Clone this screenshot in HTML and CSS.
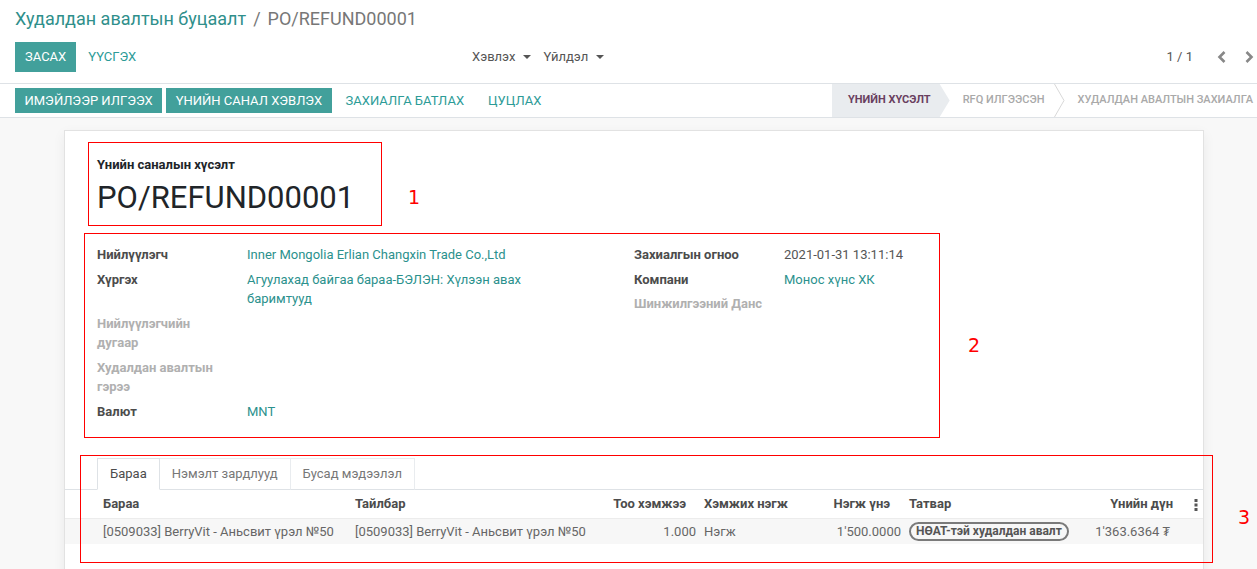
FILE: index.html
```html
<!DOCTYPE html>
<html lang="mn">
<head>
<meta charset="utf-8">
<title>PO/REFUND00001</title>
<link rel="stylesheet" href="styles.css">
</head>
<body>
<div class="app">
  <div class="control-panel">
    <ol class="breadcrumb">
      <li class="bc-link">Худалдан авалтын буцаалт</li>
      <li class="bc-active">PO/REFUND00001</li>
    </ol>
    <div class="cp-bottom">
      <div class="cp-left">
        <button class="btn btn-primary">ЗАСАХ</button>
        <button class="btn btn-link">ҮҮСГЭХ</button>
      </div>
      <div class="cp-menus">
        <span class="dropdown">Хэвлэх<span class="caret"></span></span>
        <span class="dropdown">Үйлдэл<span class="caret"></span></span>
      </div>
      <div class="pager">
        <span class="pager-value">1 / 1</span>
        <svg class="pager-prev" width="10" height="14" viewBox="0 0 10 14"><polyline points="7.5,2 2.5,7 7.5,12" /></svg>
        <svg class="pager-next" width="10" height="14" viewBox="0 0 10 14"><polyline points="2.5,2 7.5,7 2.5,12" /></svg>
      </div>
    </div>
  </div>

  <div class="statusbar">
    <div class="sb-buttons">
      <button class="btn btn-sm btn-primary">ИМЭЙЛЭЭР ИЛГЭЭХ</button>
      <button class="btn btn-sm btn-primary">ҮНИЙН САНАЛ ХЭВЛЭХ</button>
      <button class="btn btn-sm btn-link">ЗАХИАЛГА БАТЛАХ</button>
      <button class="btn btn-sm btn-link">ЦУЦЛАХ</button>
    </div>
    <div class="sb-stages">
      <span class="stage active">ҮНИЙН ХҮСЭЛТ</span>
      <span class="stage">RFQ ИЛГЭЭСЭН<svg class="stage-chev" width="11" height="33" viewBox="0 0 11 33"><polyline points="0.5,0 10,16.5 0.5,33" /></svg></span>
      <span class="stage last">ХУДАЛДАН АВАЛТЫН ЗАХИАЛГА</span>
    </div>
  </div>

  <div class="sheet-bg">
    <div class="sheet">
      <div class="oe-title">
        <div class="title-label">Үнийн саналын хүсэлт</div>
        <h1 class="title-name">PO/REFUND00001</h1>
      </div>

      <div class="groups">
        <div class="group">
          <div class="f-label">Нийлүүлэгч</div>
          <div class="f-value link">Inner Mongolia Erlian Changxin Trade Co.,Ltd</div>
          <div class="f-label">Хүргэх</div>
          <div class="f-value link">Агуулахад байгаа бараа-БЭЛЭН: Хүлээн авах баримтууд</div>
          <div class="f-label muted">Нийлүүлэгчийн дугаар</div>
          <div class="f-value"></div>
          <div class="f-label muted">Худалдан авалтын гэрээ</div>
          <div class="f-value"></div>
          <div class="f-label">Валют</div>
          <div class="f-value link">MNT</div>
        </div>
        <div class="group">
          <div class="f-label">Захиалгын огноо</div>
          <div class="f-value">2021-01-31 13:11:14</div>
          <div class="f-label">Компани</div>
          <div class="f-value link">Монос хүнс ХК</div>
          <div class="f-label muted">Шинжилгээний Данс</div>
          <div class="f-value"></div>
        </div>
      </div>

      <div class="notebook">
        <ul class="tabs">
          <li class="tab active">Бараа</li>
          <li class="tab">Нэмэлт зардлууд</li>
          <li class="tab">Бусад мэдээлэл</li>
        </ul>
        <table class="lines">
          <colgroup>
            <col class="c-product">
            <col class="c-desc">
            <col class="c-qty">
            <col class="c-uom">
            <col class="c-price">
            <col class="c-tax">
            <col class="c-subtotal">
            <col class="c-opt">
          </colgroup>
          <thead>
            <tr>
              <th class="first">Бараа</th>
              <th>Тайлбар</th>
              <th class="num qty-h">Тоо хэмжээ</th>
              <th>Хэмжих нэгж</th>
              <th class="num price-h">Нэгж үнэ</th>
              <th>Татвар</th>
              <th class="num total-h">Үнийн дүн</th>
              <th class="opt"><svg width="4" height="12" viewBox="0 0 4 12"><rect x="0.5" y="0" width="3" height="3"/><rect x="0.5" y="4.5" width="3" height="3"/><rect x="0.5" y="9" width="3" height="3"/></svg></th>
            </tr>
          </thead>
          <tbody>
            <tr>
              <td class="first">[0509033] BerryVit - Аньсвит үрэл №50</td>
              <td>[0509033] BerryVit - Аньсвит үрэл №50</td>
              <td class="num">1.000</td>
              <td>Нэгж</td>
              <td class="num">1'500.0000</td>
              <td><span class="tag">НӨАТ-тэй худалдан авалт</span></td>
              <td class="num subtotal">1'363.6364 ₮</td>
              <td></td>
            </tr>
          </tbody>
        </table>
      </div>
    </div>
  </div>

  <div class="annot box1"></div>
  <div class="annot box2"></div>
  <div class="annot box3"></div>
  <span class="annot-num n1">1</span>
  <span class="annot-num n2">2</span>
  <span class="annot-num n3">3</span>
</div>
</body>
</html>
```

FILE: styles.css
```css
* { box-sizing: border-box; }

html, body {
  margin: 0;
  padding: 0;
  height: 100%;
  overflow: hidden;
}

body {
  font-family: Roboto, "Noto Sans", "DejaVu Sans", sans-serif;
  font-size: 13px;
  line-height: 1.5;
  color: #4c4c4c;
  background: #fff;
}

.app {
  position: relative;
  height: 569px;
  display: flex;
  flex-direction: column;
  overflow: hidden;
}

/* ---------- control panel ---------- */
.control-panel {
  padding: 8px 0 11px 15px;
  border-bottom: 1px solid #dee2e6;
}

.breadcrumb {
  list-style: none;
  margin: 0;
  padding: 0;
  display: flex;
  font-size: 18px;
  line-height: 22px;
}

.bc-link { color: #2f8f8b; }
.bc-active { color: #777; }
.bc-active::before {
  content: "/";
  color: #777;
  padding: 0 7px;
}

.cp-bottom {
  margin-top: 12px;
  height: 30px;
  display: grid;
  grid-template-columns: 457px 1fr auto;
  align-items: center;
}

.cp-left { display: flex; align-items: center; gap: 2px; }

.btn {
  font-family: inherit;
  font-size: 13px;
  border: 1px solid transparent;
  border-radius: 0;
  background: none;
  padding: 0 9px;
  height: 30px;
  line-height: 28px;
  cursor: pointer;
  white-space: nowrap;
}

.btn-sm {
  height: 25px;
  line-height: 23px;
  padding: 0 8.5px;
}

.btn-primary {
  background: #42a09b;
  border-color: #42a09b;
  color: #fff;
}

.btn-link { color: #2c9b97; }
.btn-sm.btn-link { padding: 0 9px; }

.cp-menus {
  display: flex;
  align-items: center;
  gap: 12px;
  color: #555;
}

.dropdown { display: inline-flex; align-items: center; }

.caret {
  display: inline-block;
  margin-left: 8px;
  border-top: 4px solid #555;
  border-left: 4px solid transparent;
  border-right: 4px solid transparent;
}

.pager {
  display: flex;
  align-items: center;
  padding-right: 3px;
  color: #555;
}

.pager svg polyline {
  fill: none;
  stroke: #888;
  stroke-width: 2.6;
}

.pager-prev { margin-left: 24px; }
.pager-next { margin-left: 17px; }

/* ---------- status bar ---------- */
.statusbar {
  height: 34px;
  display: flex;
  justify-content: space-between;
  border-bottom: 1px solid #dee2e6;
  padding-left: 15px;
  white-space: nowrap;
}

.sb-buttons {
  display: flex;
  align-items: center;
  gap: 4px;
}

.sb-stages {
  display: flex;
  height: 33px;
  font-size: 11px;
  font-weight: 500;
  color: #a9a9a9;
  overflow: hidden;
}

.stage {
  display: flex;
  align-items: center;
  padding-left: 13px;
}

.stage.active {
  background: #e9ecef;
  color: #6a3f5f;
  font-weight: bold;
  padding: 0 19px 0 16px;
  clip-path: polygon(0 0, calc(100% - 10px) 0, 100% 50%, calc(100% - 10px) 100%, 0 100%);
}

.stage-chev {
  margin-left: 10px;
  display: block;
}

.stage-chev polyline {
  fill: none;
  stroke: #d8d8d8;
  stroke-width: 1;
}

.stage.last {
  padding-left: 12px;
  padding-right: 4px;
}

/* ---------- sheet ---------- */
.sheet-bg {
  flex: 1;
  background: #f8f8f8;
  padding: 12px 53px 0 64px;
}

.sheet {
  background: #fff;
  border: 1px solid #e2e2e2;
  border-bottom: none;
  box-shadow: 0 4px 12px rgba(0, 0, 0, 0.06);
  padding: 24px 32px 0;
  min-height: 520px;
}

.title-label {
  font-weight: bold;
  color: #212529;
  line-height: 19.5px;
}

.title-name {
  margin: 5px 0 0;
  font-size: 31px;
  line-height: 36px;
  font-weight: 400;
  color: #212529;
}

.groups {
  margin-top: 29.5px;
  display: grid;
  grid-template-columns: 1fr 1fr;
}

.group {
  display: grid;
  grid-template-columns: 150px 1fr;
  row-gap: 5px;
  align-content: start;
}

.f-label {
  font-weight: bold;
  padding-right: 15px;
  color: #4c4c4c;
}

.f-label.muted { color: #b0b0b0; }

.f-value { padding-right: 60px; color: #555; }
.f-value.link { color: #2b918d; }

/* ---------- notebook ---------- */
.notebook { margin-top: 37px; }

.tabs {
  list-style: none;
  margin: 0 -32px;
  padding: 0 0 0 32px;
  display: flex;
  height: 32px;
  border-bottom: 1px solid #dee2e6;
}

.tab {
  height: 32px;
  line-height: 30px;
  padding: 0 12px;
  border: 1px solid #e9ecef;
  border-bottom-color: #dee2e6;
  color: #777;
  background: #fff;
}

.tab + .tab { margin-left: -1px; }

.tab.active {
  color: #4c4c4c;
  border-color: #dee2e6 #dee2e6 #fff;
  position: relative;
  z-index: 1;
}

.lines {
  margin: 0 -32px;
  width: calc(100% + 64px);
  table-layout: fixed;
  border-collapse: collapse;
}

.c-product { width: 286px; }
.c-desc { width: 252px; }
.c-qty { width: 97px; }
.c-uom { width: 105px; }
.c-price { width: 100px; }
.c-tax { width: 172px; }
.c-subtotal { width: 108px; }
.c-opt { width: 18px; }

.lines th, .lines td {
  padding: 0 4px;
  text-align: left;
  white-space: nowrap;
  overflow: visible;
}

.lines th {
  height: 28px;
  font-weight: bold;
  color: #4c4c4c;
  border-bottom: 1px solid #ececec;
}

.lines td {
  height: 26px;
  color: #666;
  background: #f7f7f7;
}

.lines .first { padding-left: 38px; }
.lines .num { text-align: right; }
.lines th.qty-h { padding-right: 14px; }
.lines th.price-h { padding-right: 15px; }
.lines th.total-h { padding-right: 12px; }
.lines td.subtotal { padding-right: 15px; }

.lines th.opt { text-align: left; padding: 0 0 0 9px; }
.lines th.opt svg { display: inline-block; vertical-align: middle; fill: #555; }

.tag {
  display: inline-block;
  border: 2px solid #7a7a7a;
  border-radius: 10px;
  padding: 0 5px;
  font-size: 12px;
  font-weight: bold;
  line-height: 15px;
  color: #555;
  vertical-align: middle;
}

/* ---------- annotations ---------- */
.annot {
  position: absolute;
  border: 1px solid #f00;
  pointer-events: none;
}

.box1 { left: 88px; top: 142px; width: 294px; height: 84px; }
.box2 { left: 84px; top: 233px; width: 856px; height: 205px; }
.box3 { left: 80px; top: 455px; width: 1133px; height: 108px; }

.annot-num {
  position: absolute;
  color: #f00;
  font-family: "DejaVu Sans", sans-serif;
  font-size: 19px;
  line-height: 1;
}

.n1 { left: 408px; top: 188px; }
.n2 { left: 968px; top: 336px; }
.n3 { left: 1238px; top: 508px; }
```
